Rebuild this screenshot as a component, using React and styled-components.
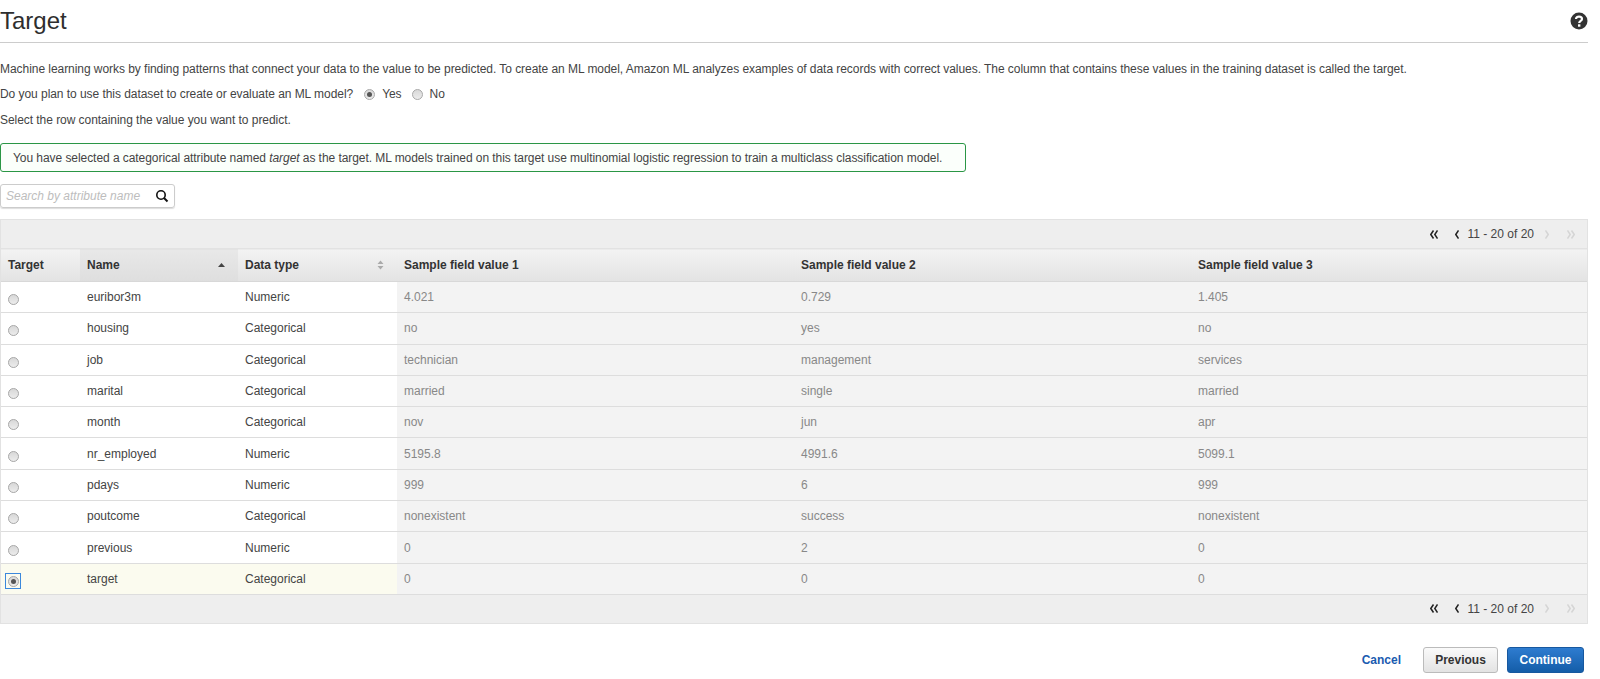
import React from "react";
import styled, { createGlobalStyle } from "styled-components";

const Global = createGlobalStyle`
  html, body { margin: 0; padding: 0; background: #fff; }
  body { font-family: "Liberation Sans", Arial, sans-serif; font-size: 12px; color: #333; }
`;
const Page = styled.div`width: 1588px; height: 679px; overflow: hidden;`;
const Header = styled.header`
  height: 42px; border-bottom: 1px solid #ccc; display: flex; align-items: center; justify-content: space-between;
`;
const Title = styled.h1`margin: 0; font-size: 24px; font-weight: 400; line-height: 38px; color: #2e2e2e;`;
const Help = styled.svg`width: 18px; height: 18px; display: block;`;
const Para = styled.p`margin: 0; line-height: 16px; color: #444; letter-spacing: -0.05px; padding-top: ${p => p.$top}px;`;
const Question = styled.div`display: flex; align-items: center; margin-top: 9px; height: 16px; color: #444; letter-spacing: -0.05px;`;
const RadioLabel = styled.span`margin-left: ${p => p.$left}px; display: inline-flex; align-items: center; gap: 7px;`;
const RadioDot = styled.span`
  width: 11px; height: 11px; border-radius: 50%; box-sizing: border-box; border: 1px solid #a8a8a8;
  background: linear-gradient(#d8d8d8, #ececec); display: flex; align-items: center; justify-content: center; flex: none;
  &::after { content: ""; width: 5px; height: 5px; border-radius: 50%; background: ${p => p.$on ? "#555" : "transparent"}; }
`;
const Alert = styled.div`
  margin-top: 15px; width: 966px; height: 29px; box-sizing: border-box; border: 1px solid #2a9645; border-radius: 3px;
  padding-left: 12px; display: flex; align-items: center; color: #444; background: #fbfffb;
  white-space: pre; letter-spacing: -0.06px;
`;
const Search = styled.div`
  margin-top: 12px; width: 175px; height: 24px; box-sizing: border-box; border: 1px solid #ccc; border-radius: 3px;
  display: flex; align-items: center; justify-content: space-between; padding: 0 5px; box-shadow: 0 1px 1px #ddd;
`;
const Placeholder = styled.span`font-style: italic; color: #bdbdbd;`;
const Grid = styled.div`margin-top: 11px; border: 1px solid #e2e2e2; background: #eee;`;
const Pager = styled.div`
  height: ${p => p.$h}px; display: flex; align-items: center; justify-content: flex-end; color: #444; font-size: 12px;
`;
const PagerCount = styled.span`margin: 0 5px 0 2px;`;
const PagerArrow = styled.span`
  width: ${p => p.$w}px; display: flex; justify-content: center; color: ${p => p.$off ? "#d5d5d5" : "#222"};
`;
const Table = styled.table`width: 100%; border-collapse: collapse; table-layout: fixed; background: #fff;`;
const Th = styled.th`
  height: 33px; padding: 0 7px; box-sizing: border-box; text-align: left; font-size: 12px; font-weight: 700; color: #333;
  background: ${p => p.$sorted ? "linear-gradient(#e8e8e8, #dedede)" : "linear-gradient(#f3f3f3, #e3e3e3)"};
  border-top: 1px solid #e2e2e2; border-bottom: 1px solid #d8d8d8;
`;
const ThInner = styled.div`display: flex; align-items: center; justify-content: space-between; padding-right: 6px;`;
const Td = styled.td`
  height: 31.3px; padding: 0 7px; box-sizing: border-box; border-bottom: 1px solid #ddd; color: ${p => p.$sample ? "#888" : "#444"};
  background: ${p => p.$sample ? "#f3f3f3" : p.$sel ? "#fbfbef" : "#fff"}; line-height: 14px;
`;
const RowRadio = styled.span`
  display: inline-flex; align-items: center; justify-content: center; width: 16px; height: 16px; box-sizing: border-box;
  margin-left: -3px; margin-top: 5px; border: ${p => p.$focus ? "1px solid #3b88dc" : "none"};
`;
const Footer = styled.footer`display: flex; justify-content: flex-end; align-items: center; margin-top: 23px; padding-right: 4px;`;
const Cancel = styled.a`font-weight: 700; color: #1a5bb0; margin-right: 22px;`;
const Btn = styled.button`
  height: 26px; box-sizing: border-box; border-radius: 3px; font: 700 12px "Liberation Sans", Arial, sans-serif; padding: 0;
  width: ${p => p.$w}px; margin-left: ${p => p.$ml}px;
  border: 1px solid ${p => p.$primary ? "#17589f" : "#bbb"};
  color: ${p => p.$primary ? "#fff" : "#333"};
  background: ${p => p.$primary ? "linear-gradient(#2e7cd0, #145da8)" : "linear-gradient(#fafafa, #e3e3e3)"};
`;

const rows = [
  ["euribor3m","Numeric","4.021","0.729","1.405"],
  ["housing","Categorical","no","yes","no"],
  ["job","Categorical","technician","management","services"],
  ["marital","Categorical","married","single","married"],
  ["month","Categorical","nov","jun","apr"],
  ["nr_employed","Numeric","5195.8","4991.6","5099.1"],
  ["pdays","Numeric","999","6","999"],
  ["poutcome","Categorical","nonexistent","success","nonexistent"],
  ["previous","Numeric","0","2","0"],
  ["target","Categorical","0","0","0"],
];

const Chevron = ({ dir, double }) => {
  const pts = (x) => dir === "left"
    ? `M${x + 3.5} 1.5 L${x + 0.8} 5.5 L${x + 3.5} 9.5`
    : `M${x + 0.5} 1.5 L${x + 3.2} 5.5 L${x + 0.5} 9.5`;
  return (
    <svg width={double ? 8 : 4} height="11" viewBox={`0 0 ${double ? 8 : 4} 11`}>
      <path d={pts(0)} fill="none" stroke="currentColor" strokeWidth="1.5" />
      {double && <path d={pts(4)} fill="none" stroke="currentColor" strokeWidth="1.5" />}
    </svg>
  );
};

const PagerBar = ({ h }) => (
  <Pager $h={h}>
    <PagerArrow $w={28}><Chevron dir="left" double /></PagerArrow>
    <PagerArrow $w={18}><Chevron dir="left" /></PagerArrow>
    <PagerCount>11 - 20 of 20</PagerCount>
    <PagerArrow $w={16} $off><Chevron dir="right" /></PagerArrow>
    <PagerArrow $w={32} $off><Chevron dir="right" double /></PagerArrow>
  </Pager>
);

export default function App() {
  return (
    <Page>
      <Global />
      <Header>
        <Title>Target</Title>
        <Help viewBox="0 0 18 18">
          <circle cx="9" cy="9" r="8.5" fill="#333" />
          <path d="M6 7 C6 3.8 12 3.8 12 7 C12 9 9.2 8.8 9.2 11" fill="none" stroke="#fff" strokeWidth="2.2" />
          <rect x="8" y="12.3" width="2.4" height="2.4" fill="#fff" />
        </Help>
      </Header>
      <Para $top={18}>Machine learning works by finding patterns that connect your data to the value to be predicted. To create an ML model, Amazon ML analyzes examples of data records with correct values. The column that contains these values in the training dataset is called the target.</Para>
      <Question>
        Do you plan to use this dataset to create or evaluate an ML model?
        <RadioLabel $left={11}><RadioDot $on />Yes</RadioLabel>
        <RadioLabel $left={10}><RadioDot />No</RadioLabel>
      </Question>
      <Para $top={10}>Select the row containing the value you want to predict.</Para>
      <Alert>You have selected a categorical attribute named <em>target</em> as the target. ML models trained on this target use multinomial logistic regression to train a multiclass classification model.</Alert>
      <Search>
        <Placeholder>Search by attribute name</Placeholder>
        <svg width="14" height="14" viewBox="0 0 14 14"><circle cx="6" cy="6" r="4.2" fill="none" stroke="#111" strokeWidth="1.6" /><path d="M9 9 L12.5 12.5" stroke="#111" strokeWidth="2" /></svg>
      </Search>
      <Grid>
        <PagerBar h={28} />
        <Table>
          <colgroup>
            <col style={{ width: 79 }} /><col style={{ width: 158 }} /><col style={{ width: 159 }} />
            <col style={{ width: 397 }} /><col style={{ width: 397 }} /><col />
          </colgroup>
          <thead>
            <tr>
              <Th>Target</Th>
              <Th $sorted><ThInner>Name<svg width="7" height="4"><path d="M0 4 L3.5 0 L7 4Z" fill="#444" /></svg></ThInner></Th>
              <Th><ThInner>Data type<svg width="7" height="10"><path d="M0.5 4 L3.5 0.5 L6.5 4Z M0.5 6 L3.5 9.5 L6.5 6Z" fill="#aaa" /></svg></ThInner></Th>
              <Th>Sample field value 1</Th>
              <Th>Sample field value 2</Th>
              <Th>Sample field value 3</Th>
            </tr>
          </thead>
          <tbody>
            {rows.map((r, i) => {
              const sel = i === 9;
              return (
                <tr key={r[0]}>
                  <Td $sel={sel}><RowRadio $focus={sel}><RadioDot $on={sel} /></RowRadio></Td>
                  <Td $sel={sel}>{r[0]}</Td>
                  <Td $sel={sel}>{r[1]}</Td>
                  <Td $sample>{r[2]}</Td>
                  <Td $sample>{r[3]}</Td>
                  <Td $sample>{r[4]}</Td>
                </tr>
              );
            })}
          </tbody>
        </Table>
        <PagerBar h={28} />
      </Grid>
      <Footer>
        <Cancel>Cancel</Cancel>
        <Btn $w={75} $ml={0}>Previous</Btn>
        <Btn $primary $w={77} $ml={9}>Continue</Btn>
      </Footer>
    </Page>
  );
}
